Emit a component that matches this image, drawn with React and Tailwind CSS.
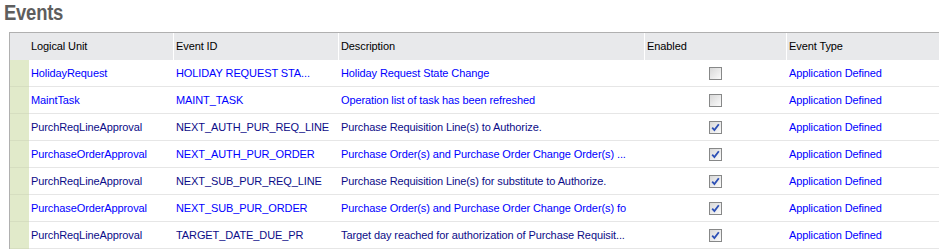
import React from 'react';

const rows = [
    { lu: 'HolidayRequest', id: 'HOLIDAY REQUEST STA...', desc: 'Holiday Request State Change', enabled: false, dark: false },
    { lu: 'MaintTask', id: 'MAINT_TASK', desc: 'Operation list of task has been refreshed', enabled: false, dark: false },
    { lu: 'PurchReqLineApproval', id: 'NEXT_AUTH_PUR_REQ_LINE', desc: 'Purchase Requisition Line(s) to Authorize.', enabled: true, dark: true },
    { lu: 'PurchaseOrderApproval', id: 'NEXT_AUTH_PUR_ORDER', desc: 'Purchase Order(s) and Purchase Order Change Order(s) ...', enabled: true, dark: false },
    { lu: 'PurchReqLineApproval', id: 'NEXT_SUB_PUR_REQ_LINE', desc: 'Purchase Requisition Line(s) for substitute to Authorize.', enabled: true, dark: true },
    { lu: 'PurchaseOrderApproval', id: 'NEXT_SUB_PUR_ORDER', desc: 'Purchase Order(s) and Purchase Order Change Order(s) fo', enabled: true, dark: false },
    { lu: 'PurchReqLineApproval', id: 'TARGET_DATE_DUE_PR', desc: 'Target day reached for authorization of Purchase Requisit...', enabled: true, dark: true },
];

const cols = 'grid grid-cols-[19px_144px_165px_306px_142px_1fr]';

const Checkbox = ({ checked }) => (
    <div className="w-[13px] h-[13px] border border-[#878888] bg-gradient-to-br from-[#d8d8d8] to-[#fbfbfb] flex items-center justify-center">
        {checked && (
            <svg width="9" height="9" viewBox="0 0 9 9">
                <path d="M1.2 4.6 L3.4 7 L7.8 1.2" fill="none" stroke="#2c4fb5" strokeWidth="1.8" />
            </svg>
        )}
    </div>
);

const App = () => {
    return (
        <div className="w-[939px] h-[251px] bg-white overflow-hidden" style={{ fontFamily: '"Liberation Sans", Arial, sans-serif' }}>
            <div className="h-[32px] pl-[4px] pt-[1px]">
                <h1 className="inline-block origin-left scale-x-[0.84] text-[22px] leading-[24px] font-bold text-[#5e5e5e] tracking-[-0.3px]">
                    Events
                </h1>
            </div>
            <div className="ml-[9px] border-t border-l border-[#b0b0b0] text-[11px] tracking-[-0.1px]">
                <div className={`${cols} h-[27px] bg-[#e8e9eb] text-black`}>
                    <div></div>
                    <div className="flex items-center pl-[2px]">Logical Unit</div>
                    <div className="flex items-center pl-[2px] border-l border-white">Event ID</div>
                    <div className="flex items-center pl-[2px] border-l border-white">Description</div>
                    <div className="flex items-center pl-[2px] border-l border-white">Enabled</div>
                    <div className="flex items-center pl-[2px] border-l border-white">Event Type</div>
                </div>
                {rows.map((r, i) => {
                    const c = r.dark ? 'text-[#0c0c88]' : 'text-[#0000ff]';
                    return (
                        <div key={i} className={`${cols} h-[27px]`}>
                            <div className="bg-[#e1eaca] border-b border-[#d6dec0]"></div>
                            <div className={`flex items-center pl-[2px] border-b border-[#e6e6e6] ${c}`}>{r.lu}</div>
                            <div className={`flex items-center pl-[3px] border-b border-[#e6e6e6] ${c}`}>{r.id}</div>
                            <div className={`flex items-center pl-[3px] border-b border-[#e6e6e6] whitespace-nowrap overflow-hidden ${c}`}>{r.desc}</div>
                            <div className="flex items-center justify-center border-b border-[#e6e6e6]">
                                <Checkbox checked={r.enabled} />
                            </div>
                            <div className="flex items-center pl-[3px] border-b border-[#e6e6e6] text-[#0000ff]">Application Defined</div>
                        </div>
                    );
                })}
            </div>
        </div>
    );
};

export default App;
